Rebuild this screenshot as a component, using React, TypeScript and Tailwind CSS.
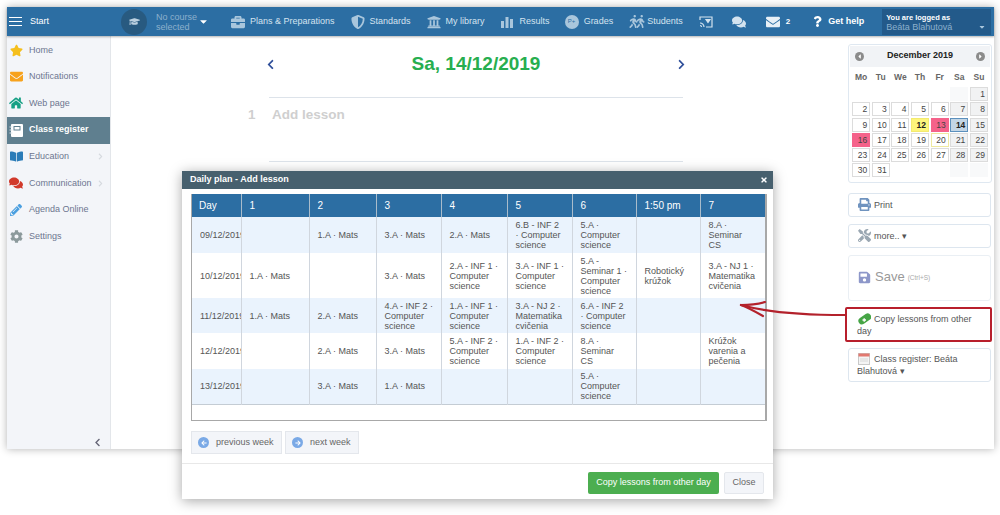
import React from "react";
import {
  FaStar, FaEnvelope, FaHome, FaBookOpen, FaComments, FaCog, FaPencilAlt, FaBriefcase, FaShieldAlt,
  FaUniversity, FaGraduationCap, FaCaretDown, FaChevronLeft, FaChevronRight, FaArrowLeft, FaArrowRight,
  FaTimes, FaPrint, FaTools, FaSave, FaQuestion, FaWalking, FaCaretLeft, FaCaretRight,
} from "react-icons/fa";

const days = ["Mo", "Tu", "We", "Th", "Fr", "Sa", "Su"];

const calRows = [
  ["", "", "", "", "", "", "1"],
  ["2", "3", "4", "5", "6", "7", "8"],
  ["9", "10", "11", "12", "13", "14", "15"],
  ["16", "17", "18", "19", "20", "21", "22"],
  ["23", "24", "25", "26", "27", "28", "29"],
  ["30", "31", "", "", "", "", ""],
];

const headCols = ["Day", "1", "2", "3", "4", "5", "6", "1:50 pm", "7"];

const rows = [
  { h: "h-[36px]", cells: ["09/12/2019", "", "1.A · Mats", "3.A · Mats", "2.A · Mats", "6.B - INF 2\n· Computer\nscience", "5.A ·\nComputer\nscience", "", "8.A ·\nSeminar\nCS"] },
  { h: "h-[45px]", cells: ["10/12/2019", "1.A · Mats", "", "3.A · Mats", "2.A - INF 1 ·\nComputer\nscience", "3.A - INF 1 ·\nComputer\nscience", "5.A -\nSeminar 1 ·\nComputer\nscience", "Robotický\nkrúžok", "3.A - NJ 1 ·\nMatematika\ncvičenia"] },
  { h: "h-[35px]", cells: ["11/12/2019", "1.A · Mats", "2.A · Mats", "4.A - INF 2 ·\nComputer\nscience", "1.A - INF 1 ·\nComputer\nscience", "3.A - NJ 2 ·\nMatematika\ncvičenia", "6.A - INF 2\n· Computer\nscience", "", ""] },
  { h: "h-[36px]", cells: ["12/12/2019", "", "2.A · Mats", "3.A · Mats", "5.A - INF 2 ·\nComputer\nscience", "1.A - INF 2 ·\nComputer\nscience", "8.A ·\nSeminar\nCS", "", "Krúžok\nvarenia a\npečenia"] },
  { h: "h-[35px]", cells: ["13/12/2019", "", "3.A · Mats", "1.A · Mats", "", "", "5.A ·\nComputer\nscience", "", ""] },
];

function CopyIcon() {
  return (
    <svg width="13" height="13" viewBox="0 0 13 13">
      <rect x="-0.5" y="3.5" width="14" height="7" rx="3.5" fill="#46a546" transform="rotate(-35 6.5 6.5)" />
      <path d="M4.5 8H8M6.2 6.2v3.6" stroke="#fff" strokeWidth="1.3" />
    </svg>
  );
}

function CalendarIcon() {
  return (
    <svg width="12" height="12" viewBox="0 0 12 12">
      <rect x="0.5" y="0.5" width="11" height="11" fill="#f4f4f4" stroke="#c9c9c9" />
      <rect x="0.5" y="0.5" width="11" height="3" fill="#e2786f" />
      <path d="M2 6h8M2 8h8" stroke="#ccc" strokeWidth="0.7" />
    </svg>
  );
}

function NotebookIcon() {
  return (
    <svg width="15" height="15" viewBox="0 0 15 15">
      <rect x="2" y="1" width="12" height="13" rx="1" fill="#fff" />
      <rect x="5" y="3.5" width="6" height="3.5" fill="none" stroke="#5f7f8f" />
      <path d="M0.5 4h3M0.5 7h3M0.5 10h3" stroke="#dfe7ec" strokeWidth="1" />
    </svg>
  );
}

function SideItem({ icon, label, arrow, active }: { icon: React.ReactNode; label: string; arrow?: boolean; active?: boolean }) {
  return (
    <div className={active ? "flex items-center h-[27px] bg-[#5f7f8f] text-white font-bold" : "flex items-center h-[26.5px] text-[#6d7690]"}>
      <span className="w-[18px] flex justify-center">{icon}</span>
      <span className="ml-[4px] text-[9px] whitespace-nowrap">{label}</span>
      {arrow && <FaChevronRight className="ml-auto mr-[6px] text-[7px] text-[#d5d9df]" />}
    </div>
  );
}

function CalCell({ d, col }: { d: string; col: number }) {
  if (!d) return <div className={col >= 5 ? "h-[14px] bg-[#f8f9fa]" : "h-[14px]"} />;
  let cls = "bg-white border-[#dcdcdc] text-[#444]";
  if (col >= 5) cls = "bg-[#f1f2f3] border-[#dcdcdc] text-[#444]";
  if (d === "12") cls = "bg-[#fdf57c] border-[#f3ea70] text-[#222] font-bold";
  if (d === "13" || d === "16") cls = "bg-[#f5628a] border-[#f5628a] text-[#444]";
  if (d === "14") cls = "bg-[#c3d6e6] border-[#5c90bd] text-[#222] font-bold";
  if (d === "20") cls = "bg-white border-[#efe9a0] text-[#444]";
  return <div className={"h-[14px] border text-right pr-[2px] text-[8.5px] leading-[13px] " + cls}>{d}</div>;
}

function SideButton({ icon, text, h = "h-[24px]" }: { icon: React.ReactNode; text: React.ReactNode; h?: string }) {
  return (
    <div className={"bg-white border border-[#dde6ef] rounded-[3px] pl-[8px] pr-[4px] text-[9px] leading-[11.5px] text-[#555] flex flex-col justify-center " + h}>
      <div>
        <span className="inline-block w-[14px] align-[-3px] mr-[2px] ml-[1px]">{icon}</span>
        {text}
      </div>
    </div>
  );
}

export default function App() {
  return (
    <div className="relative w-[1000px] h-[515px] overflow-hidden bg-white font-['Liberation_Sans',Arial,sans-serif]">
      <div className="pl-[7px] pt-[7px]">
        <div className="w-[987px] h-[442px] bg-white flex flex-col shadow-[0_0_8px_rgba(0,0,0,0.3)]">
          {/* top bar */}
          <div className="h-[29px] shrink-0 bg-[#2c6ea3] flex items-center whitespace-nowrap text-[9px] text-[#d4e3ef] shadow-[0_1px_2px_rgba(0,0,0,0.3)] z-10">
            <div className="ml-[2px] w-[13px] flex flex-col gap-[2.5px]">
              <div className="h-[1.5px] bg-white" />
              <div className="h-[1.5px] bg-white" />
              <div className="h-[1.5px] bg-white" />
            </div>
            <span className="ml-[8px] text-white">Start</span>
            <div className="ml-[72px] w-[26px] h-[26px] rounded-full bg-[#285a80] flex items-center justify-center">
              <FaGraduationCap className="text-[11px] text-[#bcd0df]" />
            </div>
            <div className="ml-[9px] text-[#8cb0cc] leading-[10px] w-[41px]">No course<br />selected</div>
            <FaCaretDown className="ml-[1px] text-[11px] text-white" />
            <FaBriefcase className="ml-[22px] text-[14px] text-[#a9c6dc]" />
            <span className="ml-[5px]">Plans &amp; Preparations</span>
            <FaShieldAlt className="ml-[16px] text-[14px] text-[#a9c6dc]" />
            <span className="ml-[5px]">Standards</span>
            <FaUniversity className="ml-[16px] text-[14px] text-[#a9c6dc]" />
            <span className="ml-[5px]">My library</span>
            <svg className="ml-[16px]" width="12" height="12" viewBox="0 0 12 12" fill="#a9c6dc">
              <rect x="0" y="5" width="3" height="7" />
              <rect x="4.5" y="1" width="3" height="11" />
              <rect x="9" y="3" width="3" height="9" />
            </svg>
            <span className="ml-[7px]">Results</span>
            <div className="ml-[15px] w-[14px] h-[14px] rounded-full bg-[#a9c6dc] text-[6px] text-[#2c6ea3] flex items-center justify-center">P+</div>
            <span className="ml-[5px]">Grades</span>
            <span className="ml-[14px] flex w-[15px] text-[13px] text-[#a9c6dc]">
              <FaWalking className="shrink-0" />
              <FaWalking className="shrink-0 -ml-[6px]" />
            </span>
            <span className="ml-[5px]">Students</span>
            <svg className="ml-[16px]" width="14" height="12" viewBox="0 0 14 12" fill="none" stroke="#d4e3ef" strokeWidth="1.2">
              <path d="M1 4V1h12v10H7" />
              <path d="M1 7a4 4 0 0 1 4 4M1 9.5a1.5 1.5 0 0 1 1.5 1.5" />
              <path d="M7 3.5h4L9 6.5z" fill="#d4e3ef" />
            </svg>
            <FaComments className="ml-[19px] text-[14px] text-[#d4e3ef]" />
            <FaEnvelope className="ml-[20px] text-[14px] text-[#e8f0f6]" />
            <span className="ml-[6px] text-[8px] font-bold text-white">2</span>
            <FaQuestion className="ml-[22px] text-[11px] text-white" />
            <span className="ml-[5px] font-bold text-white">Get help</span>
            <div className="ml-[18px] w-[109px] h-[26px] bg-[#235a8a] relative pl-[4px] pt-[4px]">
              <div className="text-[7.5px] font-bold text-white leading-[9px]">You are logged as</div>
              <div className="text-[9px] text-[#8cb0cc] leading-[11px]">Beáta Blahutová</div>
              <FaCaretDown className="absolute right-[5px] top-[14px] text-[8px] text-[#a9c6dc]" />
            </div>
          </div>

          <div className="flex flex-1 min-h-0">
            {/* left menu */}
            <div className="w-[104px] shrink-0 bg-[#f3f5f9] border-r border-[#e3e6ea] flex flex-col pt-[1px]">
              <SideItem icon={<FaStar className="text-[13px] text-[#f5bf1d]" />} label="Home" />
              <SideItem icon={<FaEnvelope className="text-[13px] text-[#f7a21d]" />} label="Notifications" />
              <SideItem icon={<FaHome className="text-[14px] text-[#17a185]" />} label="Web page" />
              <SideItem active icon={<NotebookIcon />} label="Class register" />
              <SideItem arrow icon={<FaBookOpen className="text-[13px] text-[#2b7cb8]" />} label="Education" />
              <SideItem arrow icon={<FaComments className="text-[14px] text-[#d1392b]" />} label="Communication" />
              <SideItem icon={<FaPencilAlt className="text-[12px] text-[#4a9fe0]" />} label="Agenda Online" />
              <SideItem icon={<FaCog className="text-[13px] text-[#8c9a9c]" />} label="Settings" />
              <div className="mt-auto mb-[2px] flex justify-end pr-[8px]">
                <FaChevronLeft className="text-[9px] text-[#667]" />
              </div>
            </div>

            {/* day view */}
            <div className="w-[730px] shrink-0 pt-[16px]">
              <div className="w-[422px] ml-[154px] flex items-center justify-between">
                <FaChevronLeft className="text-[11px] text-[#2f4f9a]" />
                <span className="text-[19px] leading-[24px] font-bold text-[#27ae4f]">Sa, 14/12/2019</span>
                <FaChevronRight className="text-[11px] text-[#2f4f9a]" />
              </div>
              <div className="ml-[158px] w-[414px] mt-[21px] border-t border-[#dde3ea]" />
              <div className="ml-[137px] mt-[8px] flex text-[13.5px] leading-[17px] font-bold text-[#cfcfcf]">
                <span className="w-[24px]">1</span>
                <span>Add lesson</span>
              </div>
              <div className="ml-[158px] w-[414px] mt-[38px] border-t border-[#dde3ea]" />
            </div>

            {/* right column */}
            <div className="flex-1 pl-[7px] pr-[2px] pt-[8px] flex flex-col">
              <div className="h-[139px] border border-[#dfe8f1] rounded-[3px] p-[1px]">
                <div className="h-[21px] bg-[#f1f3f6] flex items-center justify-between px-[5px] pb-[1px] text-[9px] font-bold text-[#222]">
                  <span className="w-[9px] h-[9px] rounded-full bg-[#8b8b8b] flex items-center justify-center"><FaCaretLeft className="text-[7px] text-white" /></span>
                  December 2019
                  <span className="w-[9px] h-[9px] rounded-full bg-[#8b8b8b] flex items-center justify-center"><FaCaretRight className="text-[7px] text-white" /></span>
                </div>
                <div className="grid grid-cols-7 gap-x-[1.5px] px-[2px] h-[20px] items-center text-center text-[8.5px] font-bold text-[#666]">
                  {days.map((d) => <span key={d}>{d}</span>)}
                </div>
                <div className="grid grid-cols-7 gap-x-[1.5px] gap-y-[1.3px] px-[2px]">
                  {calRows.map((r, i) => r.map((d, j) => <CalCell key={i + "-" + j} d={d} col={j} />))}
                </div>
              </div>
              <div className="mt-[10px] mr-[1px] flex flex-col gap-[7px]">
                <SideButton icon={<FaPrint className="text-[13px] text-[#6f93bf]" />} text="Print" />
                <SideButton icon={<FaTools className="text-[13px] text-[#9aa7b2]" />} text="more.. ▾" />
                <div className="h-[46px] bg-white border border-[#eaeff4] rounded-[3px] pl-[8px] pb-[2px] flex items-center">
                  <FaSave className="text-[13px] text-[#8d97c9] ml-[1px]" />
                  <span className="ml-[4px] text-[13px] text-[#999]">Save</span>
                  <span className="ml-[3px] text-[6.5px] text-[#aaa] mt-[2px]">(Ctrl+S)</span>
                </div>
                <div className="-ml-[3px] -mr-[1px] -my-[1px]">
                  <div className="h-[35px] bg-white border-2 border-[#b81f2c] rounded-[2px] pl-[10px] pr-[4px] text-[9px] leading-[11.5px] text-[#555] flex flex-col justify-center">
                    <div>
                      <span className="inline-block w-[14px] align-[-3px] mr-[2px] ml-[1px]"><CopyIcon /></span>
                      Copy lessons from other day
                    </div>
                  </div>
                </div>
                <SideButton h="h-[34px]" icon={<CalendarIcon />} text="Class register: Beáta Blahutová ▾" />
              </div>
            </div>
          </div>
        </div>
      </div>

      {/* Daily plan dialog */}
      <div className="absolute left-[182px] top-[171px] w-[591px] h-[328px] bg-white shadow-[0_2px_12px_rgba(0,0,0,0.35)] flex flex-col">
        <div className="h-[18px] bg-[#47606e] flex items-center justify-between pl-[8px] pr-[5px] text-[9px] font-bold text-white">
          Daily plan - Add lesson
          <FaTimes className="text-[8px]" />
        </div>
        <div className="mt-[5px] ml-[9px] w-[576px] h-[227px] border-r-2 border-b border-l border-[#a8a8a8] overflow-hidden">
          <table className="table-fixed border-collapse w-[574px] text-[9px] leading-[10px] text-[#555]">
            <colgroup>
              <col className="w-[49px]" />
              <col className="w-[68px]" />
              <col className="w-[67px]" />
              <col className="w-[65px]" />
              <col className="w-[66px]" />
              <col className="w-[65px]" />
              <col className="w-[64px]" />
              <col className="w-[64px]" />
              <col className="w-[66px]" />
            </colgroup>
            <thead>
              <tr className="h-[23px] bg-[#2c6ea3] text-white text-[10px]">
                {headCols.map((c, i) => (
                  <th key={c} className={"font-normal text-left border-r border-[#a9bccb] " + (i === 0 ? "pl-[7px]" : "pl-[8px]")}>{c}</th>
                ))}
              </tr>
            </thead>
            <tbody>
              {rows.map((r, i) => (
                <tr key={r.cells[0]} className={r.h + (i % 2 === 0 ? " bg-[#eaf3fd]" : " bg-white") + (i === 4 ? " border-b border-[#c4ccd4]" : "")}>
                  {r.cells.map((c, j) => (
                    <td key={j} className="p-0 pl-[8px] border-r border-[#d0d6de]">
                      <div className={j === 0 ? "whitespace-nowrap overflow-hidden" : "whitespace-pre-line"}>{c}</div>
                    </td>
                  ))}
                </tr>
              ))}
            </tbody>
          </table>
        </div>
        <div className="mt-[10px] ml-[9px] flex gap-[3px] text-[9px] text-[#666]">
          <div className="h-[23px] w-[91px] bg-[#f3f5f9] border border-[#e4e7ec] flex items-center pl-[6px]">
            <span className="w-[11px] h-[11px] rounded-full bg-[#7aa9e6] flex items-center justify-center"><FaArrowLeft className="text-[6px] text-white" /></span>
            <span className="ml-[7px]">previous week</span>
          </div>
          <div className="h-[23px] w-[74px] bg-[#f3f5f9] border border-[#e4e7ec] flex items-center pl-[6px]">
            <span className="w-[11px] h-[11px] rounded-full bg-[#7aa9e6] flex items-center justify-center"><FaArrowRight className="text-[6px] text-white" /></span>
            <span className="ml-[7px]">next week</span>
          </div>
        </div>
        <div className="mt-[9px] border-t border-[#e8e8e8] flex-1 flex justify-end items-start gap-[5px] pt-[8px] pr-[9px] text-[9px]">
          <div className="h-[22px] w-[131px] bg-[#4cae50] rounded-[2px] text-white flex items-center justify-center">Copy lessons from other day</div>
          <div className="h-[22px] w-[40px] bg-[#f3f5f9] border border-[#e4e7ec] rounded-[2px] text-[#666] flex items-center justify-center">Close</div>
        </div>
      </div>

      {/* red arrow */}
      <svg className="absolute left-[735px] top-[296px]" width="115" height="26" viewBox="0 0 115 26" fill="none" stroke="#b3212b" strokeWidth="2.2" strokeLinecap="round">
        <path d="M6 9C35 17 70 19 110 19" />
        <path d="M6 9C15 9 23 8 30 6" />
        <path d="M6 9C14 12 21 16 28 20" />
      </svg>
    </div>
  );
}
